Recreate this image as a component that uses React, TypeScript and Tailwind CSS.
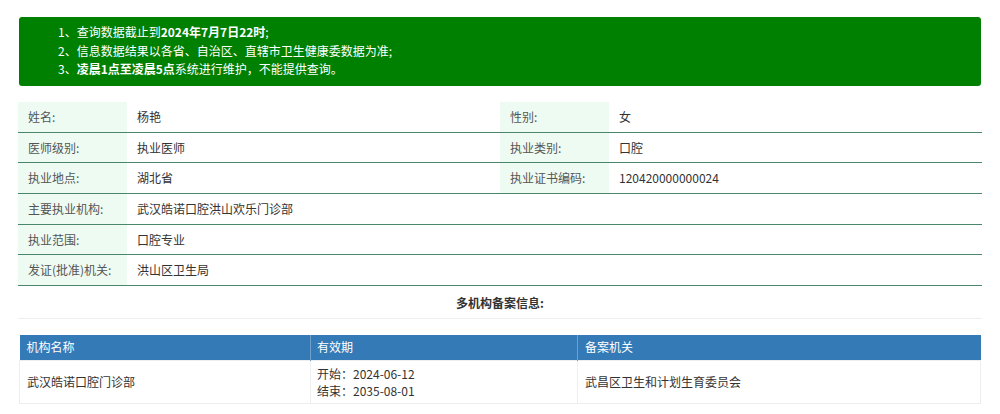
import React from "react";

const info = [
  [
    { label: "姓名:", value: "杨艳" },
    { label: "性别:", value: "女" },
  ],
  [
    { label: "医师级别:", value: "执业医师" },
    { label: "执业类别:", value: "口腔" },
  ],
  [
    { label: "执业地点:", value: "湖北省" },
    { label: "执业证书编码:", value: "120420000000024" },
  ],
  [{ label: "主要执业机构:", value: "武汉皓诺口腔洪山欢乐门诊部" }],
  [{ label: "执业范围:", value: "口腔专业" }],
  [{ label: "发证(批准)机关:", value: "洪山区卫生局" }],
];

export default function App() {
  return (
    <div
      className="relative w-[1000px] h-[414px] overflow-hidden bg-white px-[18px] pt-[17px] text-[12px] text-[#333]"
      style={{ fontFamily: '"Noto Sans CJK SC", "Noto Sans", sans-serif' }}
    >
      {/* notice */}
      <div className="mx-px h-[69px] rounded-[3px] bg-[#008000] pl-[39px] pt-[6px] text-[12px] leading-[18.5px] text-white">
        <p>
          1、查询数据截止到<b>2024年7月7日22时</b>;
        </p>
        <p>2、信息数据结果以各省、自治区、直辖市卫生健康委数据为准;</p>
        <p>
          3、<b>凌晨1点至凌晨5点</b>系统进行维护，不能提供查询。
        </p>
      </div>

      {/* doctor info */}
      <div className="mt-[16px]">
        {info.map((row, i) => (
          <div
            key={i}
            className="flex h-[30.7px] border-b border-[#4a876a]"
          >
            {row.map((cell, j) => (
              <div
                key={j}
                className={`flex ${row.length === 1 ? "flex-1" : "w-[482px]"}`}
              >
                <div className="flex w-[109px] items-center bg-[#eefbf3] pl-[10px] text-[#555]">
                  {cell.label}
                </div>
                <div className="flex flex-1 items-center pl-[10px] text-[#333]">
                  {cell.value}
                </div>
              </div>
            ))}
          </div>
        ))}
      </div>

      <div className="flex h-[33px] items-center justify-center border-b border-[#eeeeee] pt-[2px] font-bold text-[#333]">
        多机构备案信息:
      </div>

      {/* branch table */}
      <table className="mx-px mt-[16px] w-[962px] border-collapse text-left">
        <thead>
          <tr className="h-[25px] bg-[#337ab7] text-white">
            <th className="w-[291px] border-r border-[#6fa0cc] pl-[7px] font-normal">
              机构名称
            </th>
            <th className="w-[267px] border-r border-[#6fa0cc] pl-[6px] font-normal">
              有效期
            </th>
            <th className="pl-[7px] font-normal">备案机关</th>
          </tr>
        </thead>
        <tbody>
          <tr className="h-[43px] border border-[#eeeeee]">
            <td className="border-r border-[#eeeeee] pl-[7px]">
              武汉皓诺口腔门诊部
            </td>
            <td className="border-r border-[#eeeeee] pl-[6px] leading-[17px]">
              <div>开始：2024-06-12</div>
              <div>结束：2035-08-01</div>
            </td>
            <td className="pl-[7px]">武昌区卫生和计划生育委员会</td>
          </tr>
        </tbody>
      </table>
    </div>
  );
}
